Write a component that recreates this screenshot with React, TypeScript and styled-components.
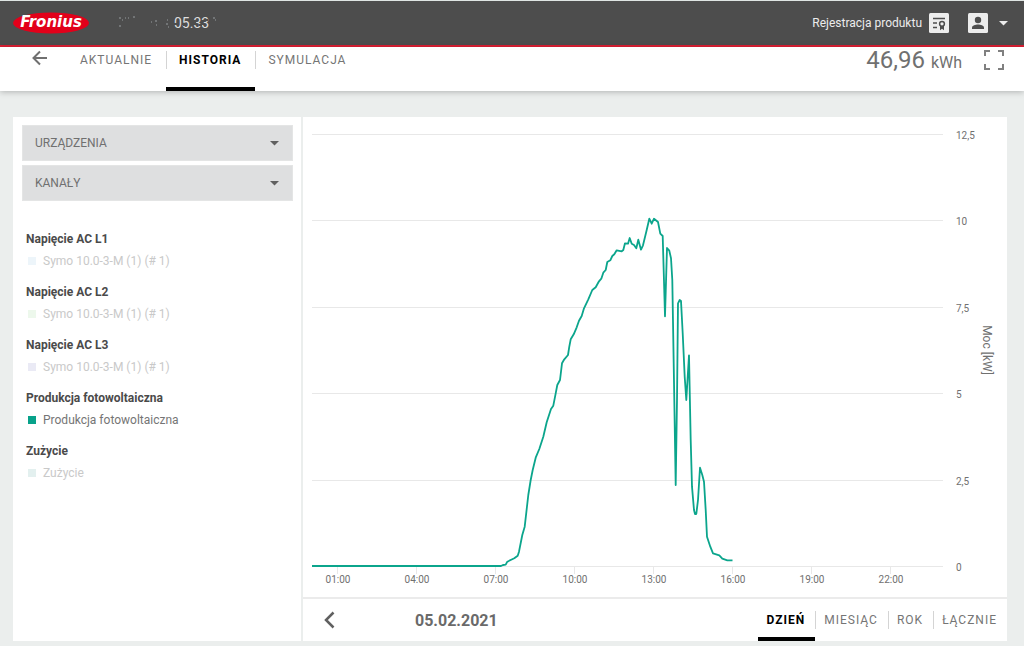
import React from "react";
import styled, { createGlobalStyle } from "styled-components";

const GlobalStyle = createGlobalStyle`
  *, *::before, *::after { box-sizing: border-box; }
  body {
    margin: 0;
    background: #ebeeed;
    color: #707070;
    font-family: Roboto, "Liberation Sans", sans-serif;
    font-size: 12px;
  }
  button, select { font: inherit; color: inherit; }
  button { border: 0; padding: 0; background: none; cursor: pointer; }
  svg { display: block; }
`;

const TopBar = styled.header`
  display: flex;
  align-items: center;
  height: 47px;
  padding: 0 16px 0 13px;
  border-top: 1px solid #dfe5e3;
  border-bottom: 2px solid #dd1f33;
  background: #4d4d4d;
  color: #ececec;
`;

const HomeLink = styled.a`
  display: block;
  margin-right: 24px;
`;

const SystemName = styled.div`
  flex: 1;
`;

const RegisterLink = styled.a`
  display: flex;
  align-items: center;
  gap: 7px;
  margin-right: 19px;
  color: inherit;
  text-decoration: none;
`;

const AccountButton = styled.button`
  display: flex;
  align-items: center;
  gap: 11px;
`;

const SubBar = styled.div`
  display: flex;
  align-items: flex-start;
  height: 44px;
  padding: 0 19px 0 31px;
  background: #fff;
  box-shadow: 0 1px 6px rgba(0, 0, 0, 0.25);
`;

const BackButton = styled.button`
  margin: 2px 18px 0 0;
`;

const Tabs = styled.nav`
  display: flex;
  align-self: stretch;
  flex: 1;
`;

const Tab = styled.a<{ $active?: boolean; $divided?: boolean }>`
  position: relative;
  padding: 4px 14px 0 13px;
  border-bottom: 4px solid ${(p) => (p.$active ? "#000" : "transparent")};
  color: ${(p) => (p.$active ? "#000" : "#757575")};
  font-weight: ${(p) => (p.$active ? 700 : 400)};
  letter-spacing: 1px;
  line-height: 18px;
  text-decoration: none;

  &::before {
    content: "";
    display: ${(p) => (p.$divided ? "block" : "none")};
    position: absolute;
    left: 0;
    top: 4px;
    width: 1px;
    height: 18px;
    background: #d4d4d4;
  }
`;

const Energy = styled.div`
  margin-right: 21px;
  font-size: 24px;
  line-height: 26px;
`;

const Unit = styled.span`
  font-size: 16px;
`;

const ExpandButton = styled.button`
  margin-top: 2px;
`;

const Content = styled.main`
  display: grid;
  grid-template-columns: 288px minmax(0, 1fr);
  gap: 2px;
  margin: 26px 17px 5px 13px;
`;

const Sidebar = styled.aside`
  padding: 8px 8px 0 9px;
  background: #fff;
`;

const SelectBox = styled.label`
  display: grid;
  align-items: center;
  margin-bottom: 4px;
  background: #dedfe0;

  & > * { grid-area: 1 / 1; }
  & > svg { justify-self: end; margin-right: 14px; pointer-events: none; }
`;

const Select = styled.select`
  width: 100%;
  height: 36px;
  padding: 0 12px;
  border: 1px solid #e4e5e5;
  border-radius: 0;
  background: transparent;
  appearance: none;
`;

const Legend = styled.div`
  display: flex;
  flex-direction: column;
  gap: 9px;
  padding: 24px 4px 0;
`;

const LegendTitle = styled.h2`
  margin: 0;
  color: #4a4a4a;
  font-size: 12px;
  font-weight: 700;
  line-height: 20px;
`;

const LegendItem = styled.button<{ $on?: boolean }>`
  display: flex;
  align-items: center;
  gap: 7px;
  height: 24px;
  margin-left: 2px;
  color: ${(p) => (p.$on ? "#757575" : "#c9c9c9")};
`;

const Swatch = styled.span<{ $color: string }>`
  width: 8px;
  height: 8px;
  background: ${(p) => p.$color};
`;

const ChartPanel = styled.section`
  background: #fff;
`;

const Chart = styled.svg`
  width: 100%;
  height: auto;
  font-size: 10px;
  fill: #707070;
`;

const RangeBar = styled.div`
  display: flex;
  align-items: center;
  height: 44px;
  border-top: 2px solid #ebebeb;
`;

const PrevButton = styled.button`
  margin-left: 20px;
`;

const DateLabel = styled.time`
  flex: 1;
  margin-left: 79px;
  color: #6a6a6a;
  font-size: 16px;
  font-weight: 700;
`;

const RangeTabs = styled.nav`
  display: flex;
  align-self: stretch;
`;

const RangeTab = styled(Tab)`
  padding: 12px 10px 0 9px;
  &::before { top: 12px; }
`;

const series: [number, number][] = [
  [312, 566], [501, 566], [503, 565], [505.7, 564.7], [507.3, 561.7], [514.3, 558.3], [517.7, 555.7],
  [519, 551.7], [522.3, 535], [524.7, 526.7], [528.3, 495], [530.7, 480], [532.7, 470],
  [535.7, 457.7], [539.3, 449], [543.3, 436.7], [546.7, 422.3], [551, 409], [553.3, 405.7],
  [555.7, 393.3], [557.3, 385], [560, 380], [562, 363.3], [564.3, 359.3], [568, 355],
  [569.3, 346.7], [570.7, 339.3], [573.7, 334.3], [576.7, 327.3], [579, 320.7], [581.7, 316],
  [584, 308.3], [588.3, 299.3], [592.3, 290], [595.7, 287.3], [599, 281.3], [601.3, 278.7],
  [603.3, 272.7], [605.7, 270], [607.3, 262], [610.3, 260.3], [612.3, 256], [614.3, 254.3],
  [616.7, 250.3], [621.7, 251.3], [623.3, 250], [625, 243.3], [628, 243.7], [629.7, 238],
  [631.7, 243.7], [634, 245], [636.3, 248.3], [638.3, 239.7], [641, 249.7], [643, 245.3],
  [646.7, 230], [649.3, 218.7], [651.7, 223.7], [654, 218.7], [658, 222], [660.3, 233.7],
  [662.7, 236], [665, 316.3], [667, 248], [669.3, 250.7], [671, 258.3], [672.3, 280],
  [674.3, 400], [675.7, 485], [677, 400], [678, 303.3], [679.7, 300], [681, 301],
  [682.7, 333.3], [684.7, 376.7], [686.3, 400], [689, 355.3], [690.7, 440], [692, 486.7],
  [694, 510], [695, 514], [696.3, 514], [698, 500], [700, 467.7], [702.3, 475], [704, 481.7],
  [705.7, 510], [707, 536.7], [710.3, 546.7], [713, 553.3], [719.3, 555.3], [722.3, 558.7],
  [727.3, 560.3], [732.5, 560.3],
];

const powerTicks: [string, number][] = [
  ["12,5", 135], ["10", 221], ["7,5", 308], ["5", 394], ["2,5", 481], ["0", 567],
];

const hourTicks: [string, number][] = [
  ["01:00", 338], ["04:00", 417], ["07:00", 496], ["10:00", 575],
  ["13:00", 654], ["16:00", 733], ["19:00", 812], ["22:00", 891],
];

const channels = [
  { title: "Napięcie AC L1", label: "Symo 10.0-3-M (1) (# 1)", color: "#edf5fa", on: false },
  { title: "Napięcie AC L2", label: "Symo 10.0-3-M (1) (# 1)", color: "#edf8ec", on: false },
  { title: "Napięcie AC L3", label: "Symo 10.0-3-M (1) (# 1)", color: "#eaeaf5", on: false },
  { title: "Produkcja fotowoltaiczna", label: "Produkcja fotowoltaiczna", color: "#07a28a", on: true },
  { title: "Zużycie", label: "Zużycie", color: "#e3f0ef", on: false },
];

const Caret = ({ color }: { color: string }) => (
  <svg width="9" height="5" viewBox="0 0 9 5" aria-hidden="true">
    <path d="M0 0h9L4.5 4.5z" fill={color} />
  </svg>
);

const Logo = () => (
  <svg width="77" height="22" viewBox="0 0 77 22" role="img" aria-label="Fronius">
    <ellipse cx="38" cy="11" rx="38" ry="10.5" fill="#e2001a" />
    <text
      x="38"
      y="15"
      textAnchor="middle"
      fill="#fff"
      fontFamily="DejaVu Sans, sans-serif"
      fontSize="15"
      fontWeight="700"
      fontStyle="italic"
    >
      Fronius
    </text>
  </svg>
);

/* System number whose leading characters are reduced to faint traces. */
const SystemNumber = () => (
  <svg width="110" height="20" viewBox="0 0 110 20" role="img" aria-label="05.33">
    <text x="60" y="15" fill="#dedede" fontSize="14">05.33</text>
    <path d="M60 11h3M69 12h4M79 9h3M85 12h3M91 7h3" stroke="#4d4d4d" strokeWidth="2" />
    <path
      d="M5 5h2M8 7h1M14 5h1M19 4h2M5 13h2M11 5h1M37 9h1M41 8h2M42 12h1M53 7h1M52 11h2M54 14h1M99 5h2M101 7h1"
      stroke="#989da0"
      strokeWidth="1"
    />
  </svg>
);

export default function App() {
  return (
    <>
      <GlobalStyle />
      <TopBar>
        <HomeLink href="#"><Logo /></HomeLink>
        <SystemName><SystemNumber /></SystemName>
        <RegisterLink href="#">
          Rejestracja produktu
          <svg width="20" height="20" viewBox="0 0 20 20" aria-hidden="true">
            <rect width="20" height="20" rx="1.5" fill="#ececec" />
            <path d="M4 5.5h12M4 10h4M4 14.5h4" stroke="#4d4d4d" strokeWidth="1.6" />
            <circle cx="13" cy="10.8" r="2.4" fill="none" stroke="#4d4d4d" strokeWidth="1.5" />
            <path d="M11 13v4.2l2-1.4 2 1.4V13z" fill="#4d4d4d" />
          </svg>
        </RegisterLink>
        <AccountButton aria-label="Konto">
          <svg width="20" height="20" viewBox="0 0 20 20" aria-hidden="true">
            <rect width="20" height="20" rx="1.5" fill="#ececec" />
            <circle cx="10" cy="7" r="3.2" fill="#4d4d4d" />
            <path d="M4 16v-1.3C4 12.5 7.5 11.6 10 11.6s6 .9 6 3.1V16z" fill="#4d4d4d" />
          </svg>
          <Caret color="#ececec" />
        </AccountButton>
      </TopBar>

      <SubBar>
        <BackButton aria-label="Wstecz">
          <svg width="18" height="18" viewBox="0 0 18 18" fill="none" stroke="#707070" strokeWidth="2" aria-hidden="true">
            <path d="M16 9H3.5M9 2.5L2.5 9L9 15.5" />
          </svg>
        </BackButton>
        <Tabs>
          <Tab href="#">AKTUALNIE</Tab>
          <Tab href="#" $active $divided>HISTORIA</Tab>
          <Tab href="#" $divided>SYMULACJA</Tab>
        </Tabs>
        <Energy>46,96 <Unit>kWh</Unit></Energy>
        <ExpandButton aria-label="Pełny ekran">
          <svg width="22" height="22" viewBox="0 0 22 22" fill="none" stroke="#808080" strokeWidth="2" aria-hidden="true">
            <path d="M2 7V2h5M15 2h5v5M20 15v5h-5M7 20H2v-5" />
          </svg>
        </ExpandButton>
      </SubBar>

      <Content>
        <Sidebar>
          <SelectBox>
            <Select aria-label="Urządzenia"><option>URZĄDZENIA</option></Select>
            <Caret color="#606060" />
          </SelectBox>
          <SelectBox>
            <Select aria-label="Kanały"><option>KANAŁY</option></Select>
            <Caret color="#606060" />
          </SelectBox>
          <Legend>
            {channels.map((c) => (
              <div key={c.title}>
                <LegendTitle>{c.title}</LegendTitle>
                <LegendItem $on={c.on} aria-pressed={c.on}>
                  <Swatch $color={c.color} />
                  {c.label}
                </LegendItem>
              </div>
            ))}
          </Legend>
        </Sidebar>

        <ChartPanel>
          <Chart viewBox="303 117 704 480" role="img" aria-label="Moc [kW]">
            {powerTicks.map(([label, y]) => (
              <g key={label}>
                <path d={`M312 ${y - 0.5}H943`} stroke="#e8e8e8" />
                <text x="956" y={y + 4}>{label}</text>
              </g>
            ))}
            {hourTicks.map(([label, x]) => (
              <g key={label}>
                <path d={`M${x - 0.5} 567v7`} stroke="#e8e8e8" />
                <text x={x} y="583" textAnchor="middle">{label}</text>
              </g>
            ))}
            <text transform="translate(983 350) rotate(90)" textAnchor="middle" fontSize="12">Moc [kW]</text>
            <polyline
              points={series.map((p) => p.join(",")).join(" ")}
              fill="none"
              stroke="#0ba58c"
              strokeWidth="1.8"
              strokeLinejoin="round"
            />
          </Chart>
          <RangeBar>
            <PrevButton aria-label="Poprzedni dzień">
              <svg width="13" height="18" viewBox="0 0 13 18" fill="none" stroke="#606060" strokeWidth="2.5" aria-hidden="true">
                <path d="M10.5 1.5L3 9l7.5 7.5" />
              </svg>
            </PrevButton>
            <DateLabel dateTime="2021-02-05">05.02.2021</DateLabel>
            <RangeTabs>
              <RangeTab href="#" $active>DZIEŃ</RangeTab>
              <RangeTab href="#" $divided>MIESIĄC</RangeTab>
              <RangeTab href="#" $divided>ROK</RangeTab>
              <RangeTab href="#" $divided>ŁĄCZNIE</RangeTab>
            </RangeTabs>
          </RangeBar>
        </ChartPanel>
      </Content>
    </>
  );
}
